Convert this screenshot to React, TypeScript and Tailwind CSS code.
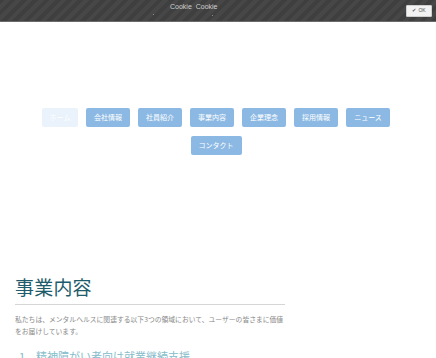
import React from "react";

const items = ["会社情報", "社員紹介", "事業内容", "企業理念", "採用情報", "ニュース"];

export default function App() {
  return (
    <div className="w-[436px] h-[358px] overflow-hidden bg-white font-['Noto_Sans_CJK_JP',sans-serif]">
      <div className="relative h-[22px] border-b border-[#6a6a6a] bg-[image:repeating-linear-gradient(-45deg,#3f3f3f_0px,#3f3f3f_4px,#474747_4px,#474747_8px)]">
        <div className="absolute left-[170px] top-[3px] flex">
          <span className="font-['Liberation_Sans',sans-serif] text-[7px] leading-[8px] text-[#cfcfcf]">Cookie&nbsp;&nbsp;Cookie</span>
        </div>
        <div className="absolute left-[153px] top-[14px] h-px w-px bg-[#8a8a8a]" />
        <div className="absolute left-[212px] top-[15px] h-px w-px bg-[#8a8a8a]" />
        <div className="absolute right-[4px] top-[5px] flex h-[12px] w-[26px] items-center justify-center gap-[2px] rounded-[1px] border border-[#cfcfcf] bg-[#f2f2f2] font-['Liberation_Sans',sans-serif] text-[5px] text-[#555]">
          <span>✔</span>
          <span>OK</span>
        </div>
      </div>

      <nav className="mt-[86px] ml-[26px] w-[380px] flex flex-wrap justify-center gap-x-[8px] gap-y-[9px]">
        <span className="h-[19px] w-[36px] rounded-[2px] bg-[#eaf3fc] text-[7px] leading-[19px] text-center text-white">ホーム</span>
        {items.map((t) => (
          <span
            key={t}
            className="h-[19px] w-[44px] rounded-[2px] bg-[#8cb9e3] text-[7px] leading-[19px] text-center text-white"
          >
            {t}
          </span>
        ))}
        <span className="h-[19px] w-[51px] rounded-[2px] bg-[#8cb9e3] text-[7px] leading-[19px] text-center text-white">
          コンタクト
        </span>
      </nav>

      <section className="mt-[120px] ml-[15px] w-[270px]">
        <h2 className="text-[19px] leading-[24px] text-[#1e5b6b] tracking-[0.2px]">事業内容</h2>
        <div className="mt-[5px] h-px bg-[#d6d6d6]" />
        <p className="mt-[8px] text-[6.8px] leading-[12px] text-[#888]">
          私たちは、メンタルヘルスに関連する以下3つの領域において、ユーザーの皆さまに価値をお届けしています。
        </p>
        <div className="mt-[12px] ml-[4px] flex gap-[11px] text-[11px] leading-[14px] text-[#86bccb]">
          <span>1</span>
          <span>精神障がい者向け就業継続支援</span>
        </div>
      </section>
    </div>
  );
}
